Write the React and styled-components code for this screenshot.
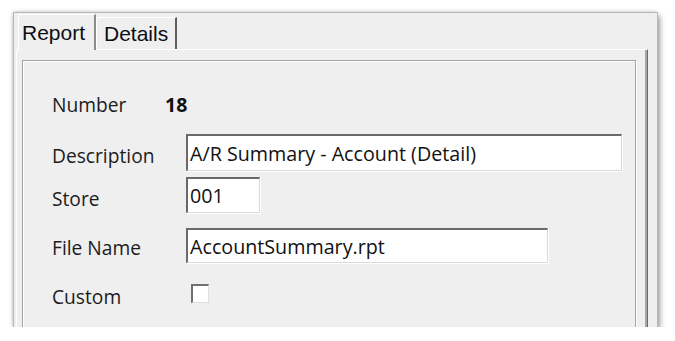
import React from 'react'
import styled, { createGlobalStyle } from "styled-components";

const Global = createGlobalStyle`
body{
  margin:0;
  background:#ffffff;
}
`;

const Frame = styled.div`
margin:13px 0 0 14px;
width:643px;
height:314px;
background:#f0eff0;
box-shadow:0 0 0 1px #b9b9b9, 2px 3px 6px rgba(0,0,0,0.5), -1px -1px 4px rgba(0,0,0,0.2);
overflow:hidden;
display:flex;
flex-direction:column;
`;

const TabStrip = styled.div`
height:36px;
flex:none;
display:flex;
align-items:flex-end;
padding-left:4px;
`;

const Tab = styled.div`
box-sizing:border-box;
width:${p => p.$w}px;
height:${p => (p.$active ? 36 : 32)}px;
margin-bottom:${p => (p.$active ? -1 : 0)}px;
position:${p => (p.$active ? 'relative' : 'static')};
z-index:${p => (p.$active ? 1 : 0)};
background:#f0eff0;
border-top:1px solid #ffffff;
border-left:1px solid #ffffff;
border-right:2px solid ${p => (p.$active ? '#8c8c8c' : '#5e5e5e')};
padding:${p => (p.$active ? '4px 0 0 3px' : '2px 0 0 7px')};
font-family:"Liberation Sans", Arial, sans-serif;
font-size:21px;
color:#0e0e12;
line-height:28px;
`;

const Page = styled.div`
flex:1;
box-sizing:border-box;
margin-left:2px;
width:632px;
border-top:1px solid #ffffff;
border-left:1px solid #ffffff;
border-right:1px solid #6a6a6a;
box-shadow:inset -2px 0 0 #a6a6a6;
padding:10px 10px 0 5px;
`;

const Group = styled.div`
box-sizing:border-box;
width:614px;
height:320px;
border:1px solid #a3a3a3;
box-shadow:inset 1px 1px 0 #ffffff, 1px 1px 0 #ffffff;
padding:27px 0 0 29px;
display:flex;
flex-direction:column;
`;

const Row = styled.div`
display:flex;
align-items:center;
height:${p => p.$h}px;
margin-top:${p => p.$gap || 0}px;
`;

const Label = styled.div`
width:${p => p.$w || 134}px;
flex:none;
font-family:"Open Sans", "Noto Sans", sans-serif;
font-size:19.2px;
color:#1c1c1c;
padding-top:${p => p.$down || 0}px;
`;

const Value = styled.div`
font-family:"Open Sans", "Noto Sans", sans-serif;
font-weight:700;
font-size:19.5px;
color:#111;
`;

const Field = styled.div`
box-sizing:border-box;
width:${p => p.$w}px;
height:100%;
background:#ffffff;
border-top:2px solid #6a6a6a;
border-left:2px solid #6a6a6a;
border-right:1px solid #d9d9d9;
border-bottom:1px solid #d9d9d9;
box-shadow:1px 1px 0 #ffffff;
display:flex;
align-items:center;
padding-left:2px;
font-family:"Open Sans", "Noto Sans", sans-serif;
font-size:19.7px;
color:#111;
`;

const Check = styled.div`
box-sizing:border-box;
width:18px;
height:19px;
margin-left:5px;
margin-top:-6px;
background:#ffffff;
border-top:2px solid #707070;
border-left:2px solid #707070;
border-right:1px solid #dedede;
border-bottom:1px solid #dedede;
`;

function App() {
  return (
    <>
      <Global />
      <Frame>
        <TabStrip>
          <Tab $active $w={78}>Report</Tab>
          <Tab $w={81}>Details</Tab>
        </TabStrip>
        <Page>
          <Group>
            <Row $h={32}>
              <Label $w={113}>Number</Label>
              <Value>18</Value>
            </Row>
            <Row $h={37} $gap={14}>
              <Label $down={5}>Description</Label>
              <Field $w={436}>A/R Summary - Account (Detail)</Field>
            </Row>
            <Row $h={36} $gap={6}>
              <Label $down={6}>Store</Label>
              <Field $w={74}>001</Field>
            </Row>
            <Row $h={35} $gap={15}>
              <Label $down={3}>File Name</Label>
              <Field $w={362}>AccountSummary.rpt</Field>
            </Row>
            <Row $h={32} $gap={17}>
              <Label>Custom</Label>
              <Check />
            </Row>
          </Group>
        </Page>
      </Frame>
    </>
  )
}

export default App
